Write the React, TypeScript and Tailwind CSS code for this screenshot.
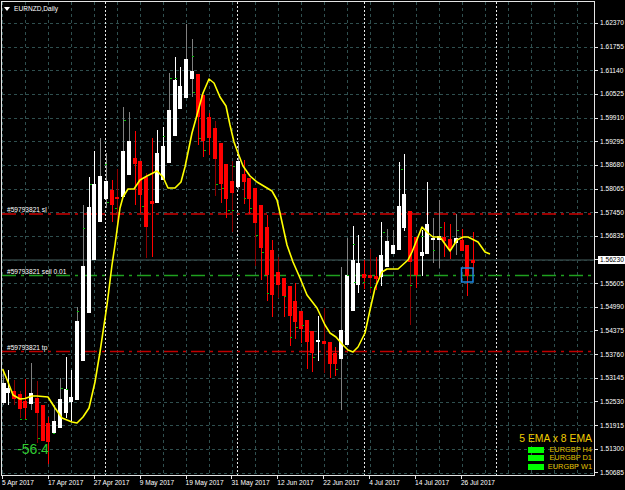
const font = { fontFamily: '"Liberation Sans", Arial, sans-serif' };

// [high, bodyTop, bodyBottom, low, body colour, wick colour]
type Candle = [number, number, number, number, 'w' | 'r', 'w' | 'g' | 'r' | 'd'];

const candles: Candle[] = [
  [372, 383, 403, 405, 'w', 'g'], [370, 388, 393, 405, 'w', 'w'], [380, 391, 399, 405, 'r', 'd'], [391, 394, 409, 418, 'r', 'd'],
  [379, 401, 408, 420, 'r', 'r'], [363, 393, 404, 410, 'w', 'g'], [381, 398, 413, 443, 'r', 'd'], [405, 405, 441, 441, 'r', 'r'],
  [417, 423, 442, 464, 'r', 'r'], [405, 421, 433, 434, 'w', 'g'], [378, 399, 428, 428, 'w', 'g'], [357, 389, 413, 418, 'w', 'w'],
  [370, 397, 402, 422, 'w', 'w'], [307, 321, 400, 400, 'w', 'g'], [205, 266, 361, 361, 'w', 'g'], [177, 207, 313, 313, 'w', 'w'],
  [151, 184, 260, 260, 'w', 'w'], [138, 176, 222, 222, 'w', 'g'], [153, 181, 199, 208, 'w', 'g'], [180, 190, 205, 222, 'r', 'r'],
  [169, 197, 199, 227, 'r', 'd'], [107, 151, 197, 197, 'w', 'g'], [112, 141, 175, 175, 'w', 'g'], [131, 158, 164, 205, 'r', 'r'],
  [161, 161, 195, 213, 'r', 'r'], [173, 177, 227, 258, 'r', 'd'], [138, 201, 204, 257, 'r', 'r'], [130, 153, 203, 203, 'w', 'w'],
  [127, 146, 180, 180, 'w', 'w'], [73, 110, 163, 163, 'w', 'g'], [57, 80, 136, 136, 'w', 'w'], [67, 86, 109, 109, 'w', 'w'],
  [24, 59, 98, 98, 'w', 'g'], [39, 71, 79, 97, 'w', 'g'], [74, 74, 117, 145, 'r', 'r'], [95, 95, 141, 157, 'r', 'r'],
  [113, 117, 138, 155, 'r', 'r'], [121, 128, 159, 196, 'r', 'd'], [143, 143, 184, 203, 'r', 'r'], [164, 164, 199, 218, 'r', 'r'],
  [161, 181, 193, 232, 'r', 'd'], [143, 161, 187, 189, 'w', 'g'], [160, 174, 182, 204, 'r', 'r'], [178, 178, 199, 214, 'r', 'r'],
  [188, 188, 223, 266, 'r', 'd'], [205, 205, 248, 280, 'r', 'r'], [215, 227, 275, 301, 'r', 'r'], [240, 250, 295, 317, 'r', 'r'],
  [257, 272, 285, 298, 'r', 'd'], [278, 278, 296, 317, 'r', 'r'], [286, 286, 316, 346, 'r', 'r'], [283, 301, 322, 339, 'r', 'r'],
  [311, 311, 329, 343, 'r', 'r'], [320, 320, 342, 369, 'r', 'r'], [331, 331, 353, 372, 'r', 'r'], [316, 340, 342, 361, 'w', 'w'],
  [308, 341, 344, 373, 'r', 'd'], [342, 342, 364, 378, 'r', 'r'], [347, 353, 364, 376, 'r', 'r'], [267, 330, 359, 410, 'w', 'g'],
  [238, 275, 345, 345, 'w', 'g'], [226, 260, 311, 311, 'w', 'w'], [235, 263, 285, 293, 'w', 'w'], [260, 274, 278, 289, 'r', 'r'],
  [249, 275, 278, 293, 'r', 'd'], [257, 276, 279, 290, 'r', 'r'], [222, 255, 277, 286, 'w', 'w'], [229, 241, 267, 267, 'w', 'g'],
  [230, 245, 254, 254, 'w', 'g'], [162, 206, 250, 250, 'w', 'w'], [154, 194, 228, 231, 'w', 'w'], [211, 211, 262, 325, 'r', 'd'],
  [237, 237, 275, 288, 'r', 'r'], [230, 252, 256, 276, 'w', 'w'], [182, 224, 254, 254, 'w', 'w'], [218, 238, 240, 263, 'w', 'g'],
  [200, 236, 240, 268, 'w', 'g'], [222, 237, 241, 257, 'r', 'r'], [224, 239, 249, 259, 'r', 'r'], [214, 238, 243, 255, 'w', 'g'],
  [229, 240, 251, 251, 'r', 'r'], [245, 245, 276, 296, 'r', 'r'], [232, 260, 263, 274, 'r', 'r'],
];

const wickColours = { w: '#ffffff', g: '#808080', r: '#ff0000', d: '#8b0000' };

const ema =
  '2.7,369 8,382 13,395 20,399 25,398.5 32,396 37,396 48,397 55,408 62,418 72,422 77,423 83,417 89,408 95,382 100,352 107,305 112,265 115,245 117,230 120,208 123,197 128,189 134,189 140,180 147,176 157,171 163,177 168,188 175,188 181,182 185,167 192,133 197,115 203,93 209,79 214,83 220,97 226,106 230,125 234,142 238,153 243,166 250,176 257,182 272,191 277,200 280,213 287,245 293,262 300,278 307,295 317,308 325,325 330,333 336,337 342,344 348,350 353,352 358,347 365,333 370,310 375,288 382,272 387,269 398,269 408,260 412,252 422,227 428,233 433,237 440,237 450,251 457,240 463,237 468,237 478,242 485,252 490,254';

// little green ticks next to the bars
const marks = [
  [20, 419], [25, 419], [38, 438], [53, 433], [61, 388], [66, 389], [77, 311], [83, 228], [90, 184], [105, 164], [107, 202], [115, 208],
  [124, 120], [142, 206], [163, 136], [170, 78], [175, 78], [192, 56], [193, 92], [199, 138], [204, 150], [216, 184], [222, 188], [228, 210],
  [232, 210], [233, 166], [244, 198], [250, 208], [256, 235], [262, 252], [267, 293], [284, 296], [290, 337], [296, 327], [302, 325],
  [313, 357], [336, 369], [347, 275], [353, 244], [354, 282], [363, 282], [370, 287], [383, 232], [401, 169], [410, 285], [421, 236],
  [433, 250], [440, 227], [457, 230],
];

const hGrid = Array.from({ length: 20 }, (_, k) => 23.4 + 23.67 * k);
const vGrid = Array.from({ length: 26 }, (_, k) => 2.5 + 23 * k);
const separators = [105.5, 237.5, 364.5, 496.5];

const prices = [
  '1.62370', '1.61755', '1.61140', '1.60525', '1.59910', '1.59295', '1.58680', '1.58065', '1.57450', '1.56835',
  '1.56230', '1.55605', '1.54990', '1.54375', '1.53760', '1.53145', '1.52530', '1.51915', '1.51300', '1.50685',
];

const dates = [
  '5 Apr 2017', '17 Apr 2017', '27 Apr 2017', '9 May 2017', '19 May 2017', '31 May 2017',
  '12 Jun 2017', '22 Jun 2017', '4 Jul 2017', '14 Jul 2017', '26 Jul 2017',
];

const orders = [
  { label: '#59793821 sl', cls: 'top-[203px]' },
  { label: '#59793821 sell 0.01', cls: 'top-[265px]' },
  { label: '#59793821 tp', cls: 'top-[341px]' },
];

const signals = ['EURGBP H4', 'EURGBP D1', 'EURGBP W1'];

const PriceChart = () => (
  <svg width={592} height={473} viewBox="2 2 592 473" className="block">
    <g stroke="#2f4f4f" strokeWidth={1} shapeRendering="crispEdges" strokeDasharray="3 3">
      {hGrid.map((y) => (
        <line key={y} x1={2} x2={594} y1={y} y2={y} />
      ))}
      {vGrid.map((x) => (
        <line key={x} x1={x} x2={x} y1={2} y2={475} />
      ))}
    </g>
    <g stroke="#e8e8e8" strokeWidth={1} shapeRendering="crispEdges" strokeDasharray="2 2">
      {separators.map((x) => (
        <line key={x} x1={x} x2={x} y1={2} y2={475} />
      ))}
    </g>
    <g>
      <line x1={2} x2={594} y1={260} y2={260} stroke="#2f4040" strokeWidth={1.4} />
      <line x1={2} x2={594} y1={214} y2={214} stroke="#d00000" strokeWidth={1.3} strokeDasharray="14 5 3 5" />
      <line x1={2} x2={594} y1={351.5} y2={351.5} stroke="#c00000" strokeWidth={1.3} strokeDasharray="14 5 3 5" />
      <line x1={2} x2={594} y1={275.5} y2={275.5} stroke="#1fa01f" strokeWidth={1.3} strokeDasharray="14 5 3 5" />
    </g>
    <g shapeRendering="crispEdges">
      {candles.map(([high, top, bottom, low, body, wick], i) => {
        const x = Math.round(2.5 + 5.74 * i);
        return (
          <g key={i}>
            <rect x={x} y={high} width={1} height={low - high} fill={wickColours[wick]} />
            <rect
              x={Math.max(x - 2, 2)}
              y={top}
              width={4}
              height={bottom - top}
              fill={body === 'w' ? '#ffffff' : '#ff0000'}
            />
          </g>
        );
      })}
      {marks.map(([x, y]) => (
        <rect key={`${x}-${y}`} x={x} y={y} width={2} height={1} fill="#00c000" />
      ))}
    </g>
    <polyline points={ema} fill="none" stroke="#ffff00" strokeWidth={1.6} strokeLinejoin="round" />
    <rect x={461.5} y={268} width={11.5} height={14} fill="none" stroke="#1a86e0" strokeWidth={1.5} />
  </svg>
);

export default function App() {
  return (
    <div className="w-[625px] h-[490px] bg-black overflow-hidden pl-px pt-px" style={font}>
      <div className="flex h-[475px]">
        {/* chart window */}
        <div className="relative w-[594px] h-[475px] border border-[#e4e4e4] shrink-0">
          <PriceChart />

          <div className="absolute left-[2px] top-[2px] flex items-center gap-[3px] text-[6.6px] leading-[9px] text-white">
            <span className="w-0 h-0 border-x-[3px] border-x-transparent border-t-[4px] border-t-white" />
            <span className="ml-[1px]">EURNZD,Daily</span>
          </div>

          {orders.map((o) => (
            <span key={o.label} className={`absolute left-[5px] ${o.cls} text-[6.6px] leading-[9px] text-white whitespace-nowrap`}>
              {o.label}
            </span>
          ))}

          <span className="absolute left-[15px] top-[439px] text-[14px] leading-[16px] text-[#32cd32]">-56.4</span>

          <div className="absolute right-[2px] bottom-[4px] flex flex-col items-end text-[#e6c400]">
            <span className="text-[10.4px] leading-[12px] mb-[1px] text-[#f0cc00]">5 EMA x 8 EMA</span>
            {signals.map((s) => (
              <div key={s} className="flex items-center h-[8.5px] w-[64px] justify-between">
                <span className="w-[16px] h-[6px] bg-[#00ff00] shrink-0" />
                <span className="text-[7.4px] leading-[8px] whitespace-nowrap">{s}</span>
              </div>
            ))}
          </div>
        </div>

        {/* price axis */}
        <div className="flex flex-col pt-[10.6px] text-[6.6px] text-white">
          {prices.map((p) => (
            <div key={p} className="flex items-center h-[23.67px] shrink-0">
              <span className="w-[3px] h-px bg-[#e4e4e4]" />
              {p === '1.56230' ? (
                <span className="h-[8px] w-[30px] bg-white text-black leading-[8px] pl-[2px]">{p}</span>
              ) : (
                <span className="pl-[2px] leading-[8px]">{p}</span>
              )}
            </div>
          ))}
        </div>
      </div>

      {/* time axis */}
      <div className="flex pl-[1px]">
        {dates.map((d) => (
          <div key={d} className="w-[45.9px] shrink-0">
            <div className="w-px h-[3px] bg-[#e4e4e4]" />
            <div className="text-[6.6px] leading-[8px] text-white whitespace-nowrap">{d}</div>
          </div>
        ))}
      </div>
    </div>
  );
}
